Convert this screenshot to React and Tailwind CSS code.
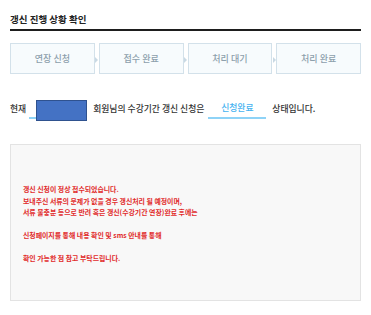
import React from 'react';

const steps = ['연장 신청', '접수 완료', '처리 대기', '처리 완료'];

const Arrow = () => (
    <div className="w-[4px] flex items-center justify-center self-stretch pt-[3px]">
        <div className="w-0 h-0 border-y-[3px] border-y-transparent border-l-[3px] border-l-[#c9d9e4]" />
    </div>
);

const App = () => {
    return (
        <div className="w-[371px] h-[315px] bg-white px-[10px] pt-[13px] font-['Noto_Sans_CJK_KR',sans-serif]">
            <div className="border-b-2 border-[#1e1e1e] pb-[4px]">
                <h1 className="text-[9.5px] leading-[12px] font-bold text-[#222]">갱신 진행 상황 확인</h1>
            </div>

            <div className="flex mt-[12px] h-[31px]">
                {steps.map((s, i) => (
                    <React.Fragment key={s}>
                        {i > 0 && <Arrow />}
                        <div className="flex-1 flex items-center justify-center border border-[#d3e1ea] bg-[#f7fbfd] text-[9px] font-medium text-[#8d9fac]">
                            {s}
                        </div>
                    </React.Fragment>
                ))}
            </div>

            <div className="flex items-center h-[20px] mt-[25px] text-[8.8px] font-medium text-[#333]">
                <span>현재</span>
                <span className="relative ml-[3px] w-[58px] h-[20px] border-b-2 border-[#8ed3f7]">
                    <span className="absolute right-0 top-[1px] w-[51px] h-[21px] bg-[#4472c4] border border-[#2f528f]" />
                </span>
                <span className="ml-[6px]">회원님의 수강기간 갱신 신청은</span>
                <span className="ml-[4px] w-[58px] h-[20px] flex items-center justify-center border-b-2 border-[#8ed3f7] text-[#46b2f0]">
                    신청완료
                </span>
                <span className="ml-[6px]">상태입니다.</span>
            </div>

            <div className="mt-[25px] h-[157px] border border-[#e3e3e3] bg-[#f8f8f8] pt-[39px] pl-[12px] text-[6.9px] leading-[11.5px] font-bold text-[#e12b2b]">
                <p>갱신 신청이 정상 접수되었습니다.</p>
                <p>보내주신 서류의 문제가 없을 경우 갱신처리 될 예정이며,</p>
                <p>서류 불충분 등으로 반려 혹은 갱신(수강기간 연장)완료 후에는</p>
                <p className="mt-[11.5px]">신청페이지를 통해 내용 확인 및 sms 안내를 통해</p>
                <p className="mt-[11.5px]">확인 가능한 점 참고 부탁드립니다.</p>
            </div>
        </div>
    );
};

export default App;
